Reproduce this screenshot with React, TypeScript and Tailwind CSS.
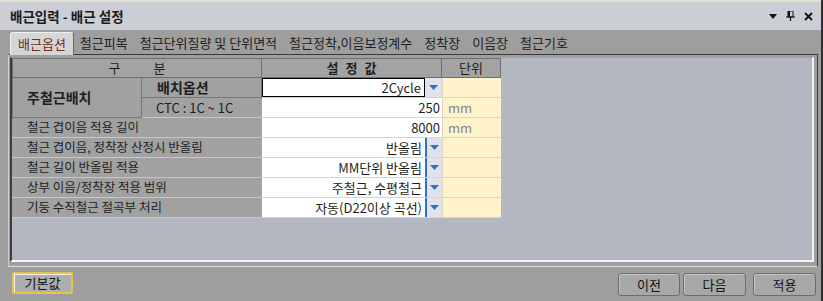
import React from 'react';

const tabs = ['배근옵션', '철근피복', '철근단위질량 및 단위면적', '철근정착,이음보정계수', '정착장', '이음장', '철근기호'];

const rows = [
  { label: '철근 겹이음 적용 길이', value: '8000', unit: 'mm', drop: false },
  { label: '철근 겹이음, 정착장 산정시 반올림', value: '반올림', unit: '', drop: true },
  { label: '철근 길이 반올림 적용', value: 'MM단위 반올림', unit: '', drop: true },
  { label: '상부 이음/정착장 적용 범위', value: '주철근, 수평철근', unit: '', drop: true },
  { label: '기둥 수직철근 절곡부 처리', value: '자동(D22이상 곡선)', unit: '', drop: true },
];

const DropBtn = ({ focused }: { focused?: boolean }) => (
  <div
    className={`w-[17px] h-full flex items-center justify-center bg-[#e2e2ea] ${
      focused ? '' : 'border-l-2 border-[#2f6fc4]'
    }`}
  >
    <svg width="9" height="5" viewBox="0 0 9 5">
      <path d="M0 0h9L4.5 5z" fill="#2178d2" />
    </svg>
  </div>
);

const UnitCell = ({ unit }: { unit: string }) => (
  <div className="h-[20px] bg-[#fff3cc] border-b border-l border-[#d9d4c4] flex items-center pl-[5px] text-[#858585]">
    {unit}
  </div>
);

const Btn = ({ label, className }: { label: string; className?: string }) => (
  <button
    className={`h-[23px] rounded-[3px] border border-[#6c6c6c] bg-[#a8a8a8] shadow-[inset_1px_1px_0_#c4c4c4] text-[13px] text-[#111] flex items-center justify-center ${className ?? ''}`}
  >
    {label}
  </button>
);

export default function App() {
  return (
    <div className="w-[823px] h-[301px] bg-[#9e9e9e] flex flex-col overflow-hidden border-r-2 border-[#2e2e2e] font-['Noto_Sans_CJK_KR','Noto_Sans',sans-serif] text-[13px] text-[#1e1e1e]">
      {/* title bar */}
      <div className="h-[30px] shrink-0 border-t-2 border-[#e4e0d6] bg-[#cbced4] flex items-center pl-[10px] pr-[8px]">
        <span className="text-[13.5px] font-bold text-[#1a1a1a]">배근입력 - 배근 설정</span>
        <div className="ml-auto flex items-center gap-[9px]">
          <svg width="8" height="5" viewBox="0 0 8 5">
            <path d="M0 0h8L4 5z" fill="#111" />
          </svg>
          <svg width="9" height="10" viewBox="0 0 9 10">
            <path d="M2 0h5v6H2z M3 1v4" fill="none" stroke="#111" strokeWidth="1" />
            <path d="M2 0h2v6H2z" fill="#111" />
            <path d="M0 6h9M4.5 6v4" stroke="#111" strokeWidth="1.2" />
          </svg>
          <svg width="9" height="9" viewBox="0 0 9 9">
            <path d="M1 1l7 7M8 1l-7 7" stroke="#111" strokeWidth="1.8" />
          </svg>
        </div>
      </div>

      {/* tabs */}
      <div className="h-[24px] shrink-0 flex items-end pl-[10px]">
        {tabs.map((t, i) =>
          i === 0 ? (
            <div
              key={t}
              className="relative z-10 -mb-px h-[23px] px-[7px] flex items-center bg-[#d5d5d5] border-t border-l border-[#f0f0f0] border-r border-r-[#6a6a6a] rounded-t-[3px] text-[#6e2e20]"
            >
              {t}
            </div>
          ) : (
            <div key={t} className="h-[22px] px-[6px] flex items-center text-[#202020]">
              {t}
            </div>
          )
        )}
      </div>

      {/* tab frame */}
      <div className="ml-[8px] w-[810px] h-[213px] shrink-0 border border-[#3a3a3a] border-l-[#cfcfcf] border-b-[#dedede] pl-px pt-[2px] pr-[3px] pb-[4px]">
        <div className="h-full bg-[#b3b7c1] border-l-2 border-t border-r-2 border-b-2 border-l-[#3c3c3c] border-t-[#98a0b4] border-r-[#f4f4f4] border-b-[#f4f4f4]">
          <div className="grid grid-cols-[130px_120px_180px_59px] w-[489px]">
            {/* header */}
            <div className="col-span-2 h-[20px] bg-[#a3a3a3] border border-[#6e6e6e] flex items-center justify-center gap-[33px]">
              <span>구</span>
              <span>분</span>
            </div>
            <div className="h-[20px] bg-[#a3a3a3] border-y border-r border-[#6e6e6e] flex items-center justify-center gap-[7px] font-bold">
              <span>설</span>
              <span>정</span>
              <span>값</span>
            </div>
            <div className="h-[20px] bg-[#a3a3a3] border-y border-r border-[#6e6e6e] flex items-center justify-center">
              단위
            </div>

            {/* 주철근배치 */}
            <div className="row-span-2 h-[40px] bg-[#a1a1a1] border border-t-0 border-[#777] flex items-center pl-[14px] text-[14px] font-bold">
              주철근배치
            </div>
            <div className="h-[20px] bg-[#a1a1a1] border-r border-b border-[#777] flex items-center pl-[15px] text-[14px] font-bold">
              배치옵션
            </div>
            <div className="h-[20px] flex bg-white border-b border-[#d4d4d4]">
              <div className="flex-1 border border-black flex items-center justify-end pr-[3px]">2Cycle</div>
              <DropBtn focused />
            </div>
            <UnitCell unit="" />

            <div className="h-[20px] bg-[#a1a1a1] border-b border-[#c6c6c6] flex items-center pl-[14px]">
              CTC : 1C ~ 1C
            </div>
            <div className="h-[20px] bg-white border-b border-[#d4d4d4] flex items-center justify-end pr-[2px]">250</div>
            <UnitCell unit="mm" />

            {rows.map((r) => (
              <React.Fragment key={r.label}>
                <div className="col-span-2 h-[20px] bg-[#a1a1a1] border-b border-[#c6c6c6] flex items-center pl-[15px] text-[12.5px]">
                  {r.label}
                </div>
                {r.drop ? (
                  <div className="h-[20px] flex bg-white border-b border-[#d4d4d4]">
                    <div className="flex-1 flex items-center justify-end pr-[3px]">{r.value}</div>
                    <DropBtn />
                  </div>
                ) : (
                  <div className="h-[20px] bg-white border-b border-[#d4d4d4] flex items-center justify-end pr-[2px]">
                    {r.value}
                  </div>
                )}
                <UnitCell unit={r.unit} />
              </React.Fragment>
            ))}
          </div>
        </div>
      </div>

      {/* bottom buttons */}
      <div className="flex-1 flex items-start pt-[5px] pl-[12px] pr-[5px]">
        <button className="w-[61px] h-[22px] rounded-[2px] border-2 border-[#e6c450] bg-[#aeaeae] shadow-[inset_1px_1px_0_#f4f4f4] text-[13px] text-[#111] flex items-center justify-center">
          기본값
        </button>
        <Btn label="이전" className="ml-auto w-[62px] mt-px" />
        <Btn label="다음" className="ml-[3px] w-[63px] mt-px" />
        <Btn label="적용" className="ml-[7px] w-[63px] mt-px" />
      </div>
    </div>
  );
}
